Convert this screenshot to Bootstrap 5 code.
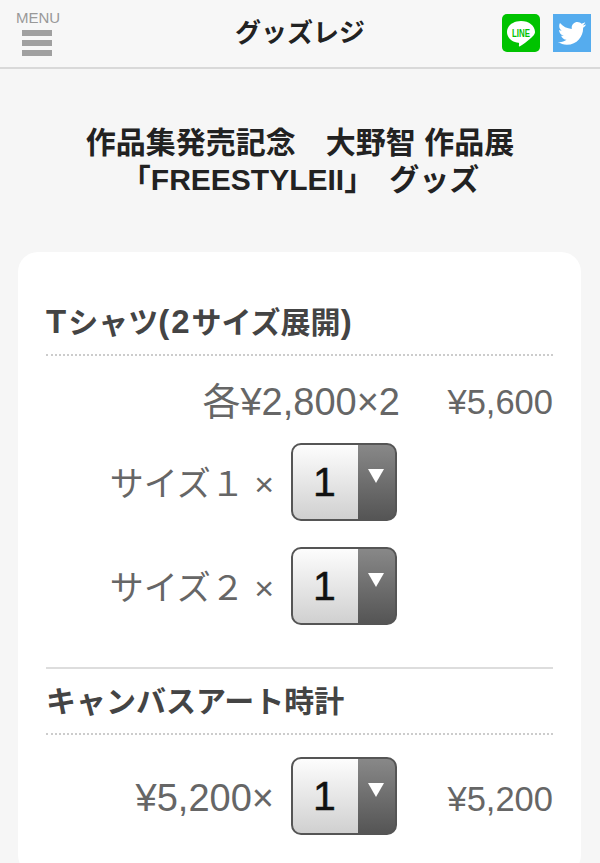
<!DOCTYPE html>
<html lang="ja">
<head>
  <meta charset="UTF-8">
  <title>グッズレジ</title>
  <meta name="viewport" content="width=device-width, initial-scale=1.0">
  <link rel="stylesheet" href="https://cdn.jsdelivr.net/npm/bootstrap@5.3.0/dist/css/bootstrap.min.css">
  <style>
    html, body { height: 863px; overflow: hidden; }
    body {
      background-color: #f6f6f6;
      font-family: "Liberation Sans", "Noto Sans CJK JP", sans-serif;
    }
    .top-bar {
      height: 69px;
      background-color: #f7f7f7;
      border-bottom: 2px solid #d9d9d9;
      padding: 0 9px 0 16px;
    }
    .menu-btn { width: 46px; color: #999; font-size: 15px; line-height: 14px; padding-top: 11px; align-self: flex-start; }
    .menu-bars { width: 30px; margin: 5px auto 0 6px; }
    .menu-bars span { display: block; height: 6px; background-color: #a0a0a0; margin-bottom: 4px; }
    .top-title { font-size: 26px; font-weight: 700; color: #222; margin: 0; line-height: 1; position: absolute; left: 0; right: 0; text-align: center; top: 20px; }
    .top-icons { gap: 13px; margin-top: -2px; }
    .page-title { font-size: 30px; line-height: 36.5px; font-weight: 700; color: #222; text-align: center; margin: 56px 0 54px; }
    .goods-box { background-color: #fff; border-radius: 20px; margin: 0 19px 0 18px; padding: 50px 28px 40px; }
    .goods-name { font-size: 30px; line-height: 40px; font-weight: 700; color: #444; margin: 0; padding-bottom: 11px; border-bottom: 2px dotted #ccc; }
    .name-latin { font-size: 33px; letter-spacing: 2px; }
    .line-text { font-size: 34px; line-height: 40px; color: #666; white-space: nowrap; }
    .price-line { margin: 26px 0 21px; }
    .label-cell { width: 228px; text-align: right; padding-top: 4px; }
    .price-big { font-size: 38px; }
    .price-top { width: 354px; text-align: right; }
    .price-cell { margin-left: auto; font-size: 34.5px; }
    .price-low { padding-top: 6px; }
    .qty-row { margin-bottom: 26px; }
    .qty-wrap { width: 106px; height: 78px; margin-left: 17px; position: relative; flex: none; }
    .qty-select {
      width: 100%; height: 100%; appearance: none; border: 2px solid #555; border-radius: 10px;
      font-family: inherit; font-size: 41px; color: #111; padding: 0 0 0 20px; outline: none;
      -webkit-text-stroke: .5px #111;
      background: linear-gradient(#888, #555) right / 37px 100% no-repeat, linear-gradient(#fdfdfd, #d0d0d0);
    }
    .qty-arrow { position: absolute; top: 26px; right: 13px; width: 0; height: 0; border-left: 8px solid transparent; border-right: 8px solid transparent; border-top: 14px solid #fff; pointer-events: none; }
    .goods-sep { border-top: 2px solid #ddd; margin-top: 42px; padding-top: 13px; }
    .clock-line { margin-top: 22px; }
  </style>
</head>
<body>
  <header class="top-bar d-flex align-items-center position-relative">
    <div class="menu-btn">
      MENU
      <div class="menu-bars"><span></span><span></span><span></span></div>
    </div>
    <h1 class="top-title">グッズレジ</h1>
    <div class="d-flex top-icons ms-auto position-relative">
      <svg width="38" height="38" viewBox="0 0 38 38" aria-label="LINE">
        <rect width="38" height="38" rx="5" fill="#00c300"/>
        <path d="M19 7c-8 0-14 4.800-14 11 0 5.500 4.800 10 11.500 10.800.8.200.6 1.200.4 2.800-.1.700.4 1 1.100.6 3-1.800 7-4.500 9.500-6.900C29.800 23.200 33 21 33 18 33 11.800 27 7 19 7z" fill="#fff"/>
        <text x="19" y="22.500" text-anchor="middle" font-family="Liberation Sans, sans-serif" font-size="11" font-weight="700" fill="#00c300" textLength="18" lengthAdjust="spacingAndGlyphs">LINE</text>
      </svg>
      <svg width="38" height="38" viewBox="0 0 38 38" aria-label="Twitter">
        <rect width="38" height="38" fill="#55acee"/>
        <path d="M33 10.500c-1 .5-2.100.8-3.300.9 1.200-.7 2.100-1.800 2.500-3.100-1.100.7-2.300 1.100-3.600 1.400-1-1.100-2.500-1.800-4.200-1.800-3.200 0-5.700 2.600-5.700 5.700 0 .4 0 .9.100 1.300C14 14.700 9.800 12.400 7 9c-.5.800-.8 1.800-.8 2.900 0 2 1 3.700 2.500 4.700-.9 0-1.800-.3-2.600-.7v.1c0 2.800 2 5.100 4.600 5.600-.5.100-1 .2-1.500.2-.4 0-.7 0-1.100-.1.700 2.300 2.900 3.900 5.400 4-2 1.500-4.500 2.500-7.100 2.500-.5 0-.9 0-1.400-.1 2.500 1.600 5.600 2.600 8.800 2.600 10.500 0 16.300-8.700 16.300-16.300v-.7c1.100-.8 2.100-1.800 2.900-3z" fill="#fff"/>
      </svg>
    </div>
  </header>

  <h2 class="page-title">作品集発売記念　大野智 作品展<br>「FREESTYLEII」　グッズ</h2>

  <main class="goods-box">
    <h3 class="goods-name"><span class="name-latin">T</span>シャツ<span class="name-latin">(2</span>サイズ展開<span class="name-latin">)</span></h3>

    <div class="d-flex line-text price-line">
      <div class="price-top price-big">各¥2,800×2</div>
      <div class="price-cell">¥5,600</div>
    </div>

    <div class="d-flex align-items-center line-text qty-row">
      <div class="label-cell">サイズ１ ×</div>
      <div class="qty-wrap">
        <select class="qty-select"><option>1</option><option>2</option></select>
        <span class="qty-arrow"></span>
      </div>
    </div>

    <div class="d-flex align-items-center line-text">
      <div class="label-cell">サイズ２ ×</div>
      <div class="qty-wrap">
        <select class="qty-select"><option>1</option><option>2</option></select>
        <span class="qty-arrow"></span>
      </div>
    </div>

    <div class="goods-sep">
      <h3 class="goods-name">キャンバスアート時計</h3>
    </div>

    <div class="d-flex align-items-center line-text clock-line">
      <div class="label-cell price-big">¥5,200×</div>
      <div class="qty-wrap">
        <select class="qty-select"><option>1</option><option>2</option></select>
        <span class="qty-arrow"></span>
      </div>
      <div class="price-cell price-low">¥5,200</div>
    </div>
  </main>
  <script src="https://cdn.jsdelivr.net/npm/bootstrap@5.3.0/dist/js/bootstrap.bundle.min.js"></script>
</body>
</html>
